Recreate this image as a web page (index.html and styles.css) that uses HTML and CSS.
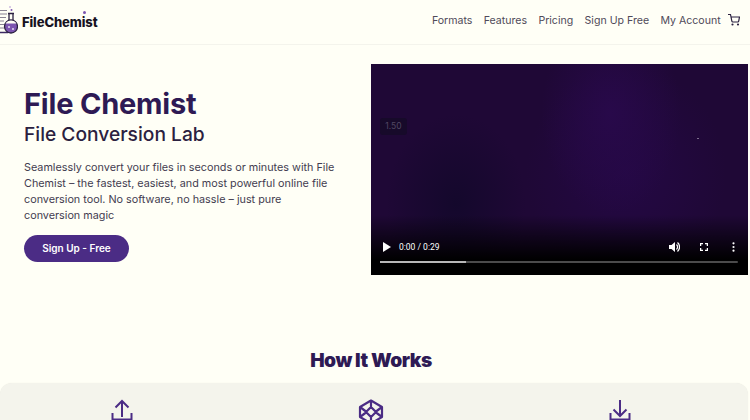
FILE: index.html
```html
<!DOCTYPE html>
<html lang="en">
<head>
    <meta charset="UTF-8">
    <meta name="viewport" content="width=device-width, initial-scale=1.0">
    <title>FileChemist</title>
    <link rel="stylesheet" href="styles.css">
</head>
<body>
    <header>
        <a class="logo" href="#">
            <svg class="logo-icon" width="20" height="32" viewBox="0 0 20 32" fill="none">
                <path d="M2 6.500h7M2 10h7M2 13.500h6M2 17h4M2 20.500h4M2 24h4" stroke="#8a8494" stroke-width="1.200"/>
                <path d="M2 28.500h8" stroke="#3c2a63" stroke-width="1.500"/>
                <circle cx="13" cy="22.500" r="6.500" fill="#7d55b0" stroke="#2b2140" stroke-width="1.300"/>
                <path d="M7.500 19.500a6.500 6.500 0 0 1 11 0z" fill="#fffff6"/>
                <path d="M10 9.500h6M11 9.500v6.500M15 9.500v6.500" stroke="#2b2140" stroke-width="1.300"/>
                <circle cx="11" cy="23" r="1" fill="#e6dcf2"/>
                <circle cx="15" cy="25" r="1" fill="#e6dcf2"/>
                <circle cx="13.500" cy="6" r="1" fill="#7d55b0"/>
                <circle cx="12" cy="3" r="0.800" fill="#a98bd0"/>
            </svg>
            <span class="logo-text">FileChemist<i class="logo-spark"></i></span>
        </a>
        <nav>
            <a href="#">Formats</a>
            <a href="#">Features</a>
            <a href="#">Pricing</a>
            <a href="#">Sign Up Free</a>
            <a href="#">My Account</a>
            <svg class="cart" width="12" height="12" viewBox="0 0 24 24" fill="none" stroke="#2b2140" stroke-width="2.400" stroke-linecap="round" stroke-linejoin="round"><circle cx="9" cy="21" r="1"/><circle cx="20" cy="21" r="1"/><path d="M1 1h4l2.700 13.400a2 2 0 0 0 2 1.600h9.700a2 2 0 0 0 2-1.600L23 6H6"/></svg>
        </nav>
    </header>

    <main>
        <section class="hero">
            <div class="hero-text">
                <h1>File Chemist</h1>
                <h2>File Conversion Lab</h2>
                <p>Seamlessly convert your files in seconds or minutes with File Chemist – the fastest, easiest, and most powerful online file conversion tool. No software, no hassle – just pure conversion magic</p>
                <a class="button" href="#">Sign Up - Free</a>
            </div>
            <div class="video">
                <span class="speed">1.50</span>
                <i class="speck"></i>
                <div class="controls">
                    <div class="controls-row">
                        <svg width="8" height="10" viewBox="0 0 8 10" fill="#fff"><path d="M0 0l8 5-8 5z"/></svg>
                        <span class="time">0:00 / 0:29</span>
                        <svg class="volume" width="12" height="12" viewBox="0 0 24 24" fill="#fff"><path d="M2 8v8h5l7 6V2L7 8z"/><path d="M17 7a7 7 0 0 1 0 10M19 3a12 12 0 0 1 0 18" fill="none" stroke="#fff" stroke-width="2.500"/></svg>
                        <svg class="fullscreen" width="8" height="8" viewBox="0 0 8 8" fill="none" stroke="#fff" stroke-width="1.300"><path d="M0.600 3V0.600H3M5 0.600h2.400V3M7.400 5v2.400H5M3 7.400H0.600V5"/></svg>
                        <svg class="more" width="3" height="10" viewBox="0 0 3 10" fill="#fff"><circle cx="1.500" cy="1.300" r="1.100"/><circle cx="1.500" cy="5" r="1.100"/><circle cx="1.500" cy="8.700" r="1.100"/></svg>
                    </div>
                    <div class="progress"><div class="progress-fill"></div></div>
                </div>
            </div>
        </section>

        <h3 class="section-title">How It Works</h3>

        <section class="steps">
            <div class="step">
                <svg width="22" height="22" viewBox="0 0 22 22" fill="none" stroke="#4b2c85" stroke-width="2"><path d="M11 18V2M4.500 8.500L11 2l6.500 6.500M1.500 14v6.500h19V14"/></svg>
            </div>
            <div class="step">
                <svg width="26" height="26" viewBox="0 0 26 26" fill="none" stroke="#4b2c85" stroke-width="2.200" stroke-linejoin="round"><path d="M13 1.500l11 6.500v10l-11 6.500L2 18V8z"/><path d="M13 1.500v6.500M2 8l6 4.500M24 8l-6 4.500M2 18l6-4.500M24 18l-6-4.500M13 24.500V18M8 13l5-5 5 5-5 5z"/></svg>
            </div>
            <div class="step">
                <svg width="22" height="22" viewBox="0 0 22 22" fill="none" stroke="#4b2c85" stroke-width="2"><path d="M11 1v16M4.500 10.500L11 17l6.500-6.500M1.500 14v6.500h19V14"/></svg>
            </div>
        </section>
    </main>
</body>
</html>
```

FILE: styles.css
```css
html, body {
    height: 420px;
    overflow: hidden;
}
body {
    margin: 0;
    background-color: #fffff6;
    color: #2b2140;
    font-family: "Inter", "Open Sans", sans-serif;
}
a {
    color: inherit;
    text-decoration: none;
}
header {
    height: 45px;
    box-sizing: border-box;
    display: flex;
    justify-content: space-between;
    align-items: center;
    border-bottom: 1px solid #f4f4ec;
    padding: 0 10px 0 0;
}
.logo {
    display: flex;
    align-items: center;
    margin-left: -2px;
}
.logo-icon {
    margin-top: -4px;
}
.logo-text {
    position: relative;
    margin-left: 4px;
    font-size: 13px;
    font-weight: 800;
    letter-spacing: -0.100px;
    color: #17121f;
}
.logo-spark {
    position: absolute;
    top: -3px;
    right: 12px;
    width: 3px;
    height: 3px;
    border-radius: 50%;
    background-color: #7d55b0;
}
nav {
    display: flex;
    align-items: center;
    gap: 11.300px;
    margin-bottom: 4px;
    font-size: 10.600px;
    color: #4f4a59;
}
.cart {
    margin-left: -4px;
}
.hero {
    display: flex;
    justify-content: space-between;
    padding: 19px 2px 0 24px;
}
.hero-text {
    width: 313px;
}
h1 {
    margin: 23px 0 0;
    font-size: 29px;
    line-height: 34px;
    font-weight: 700;
    letter-spacing: -0.200px;
    color: #2e1a54;
}
h2 {
    margin: -1px 0 0;
    font-size: 19.200px;
    line-height: 28px;
    font-weight: 500;
    color: #2b2140;
}
p {
    margin: 12px 0 0;
    font-size: 10.800px;
    line-height: 16px;
    color: #433c50;
}
.button {
    display: block;
    box-sizing: border-box;
    width: 105px;
    height: 27px;
    margin-top: 11px;
    border-radius: 14px;
    background-color: #4b2c85;
    color: #fff;
    font-size: 10px;
    font-weight: 600;
    line-height: 27px;
    text-align: center;
}
.video {
    position: relative;
    width: 377px;
    height: 211px;
    background:
        radial-gradient(ellipse 70px 100px at 240px 50px, #28094a 0%, transparent 100%),
        radial-gradient(ellipse 100px 110px at 255px 110px, #240844 0%, transparent 100%),
        radial-gradient(ellipse 70px 90px at 85px 140px, #14082c 0%, transparent 100%),
        #1f0836;
}
.speed {
    position: absolute;
    top: 54px;
    left: 9px;
    width: 27px;
    height: 17px;
    border-radius: 3px;
    background-color: #170a2a;
    color: #514762;
    font-size: 8.500px;
    line-height: 17px;
    text-align: center;
}
.speck {
    position: absolute;
    top: 74px;
    left: 326px;
    width: 2px;
    height: 1px;
    background-color: #7d6e8c;
}
.controls {
    position: absolute;
    left: 0;
    right: 0;
    bottom: 0;
    height: 60px;
    box-sizing: border-box;
    padding: 0 10px 12px 9px;
    display: flex;
    flex-direction: column;
    justify-content: flex-end;
    background: linear-gradient(rgba(0, 0, 0, 0), #000 75%);
}
.controls-row {
    display: flex;
    align-items: center;
    height: 14px;
    margin-bottom: 7px;
    padding-left: 3px;
    color: #fff;
}
.time {
    margin-left: 8px;
    font-family: "Roboto", sans-serif;
    font-size: 8.500px;
}
.volume {
    margin-left: auto;
}
.fullscreen {
    margin-left: 20px;
}
.more {
    margin-left: 24px;
    margin-right: 3px;
}
.progress {
    height: 2px;
    border-radius: 1px;
    background-color: #4b4b4b;
}
.progress-fill {
    width: 86px;
    height: 2px;
    background-color: #b8b8b8;
}
.section-title {
    margin: 73px 0 0;
    font-size: 19.200px;
    line-height: 25px;
    font-weight: 900;
    letter-spacing: -0.500px;
    text-align: center;
    color: #2e1a54;
    padding-right: 8px;
}
.steps {
    display: grid;
    grid-template-columns: repeat(3, 249px);
    box-sizing: border-box;
    width: 748px;
    height: 37px;
    margin-top: 10px;
    padding-top: 16px;
    overflow: hidden;
    border-radius: 12px 12px 0 0;
    background-color: #f4f4ec;
    box-shadow: 0 0 1px #e6e6dc;
}
.step {
    display: flex;
    justify-content: center;
    padding-right: 5px;
}
```
